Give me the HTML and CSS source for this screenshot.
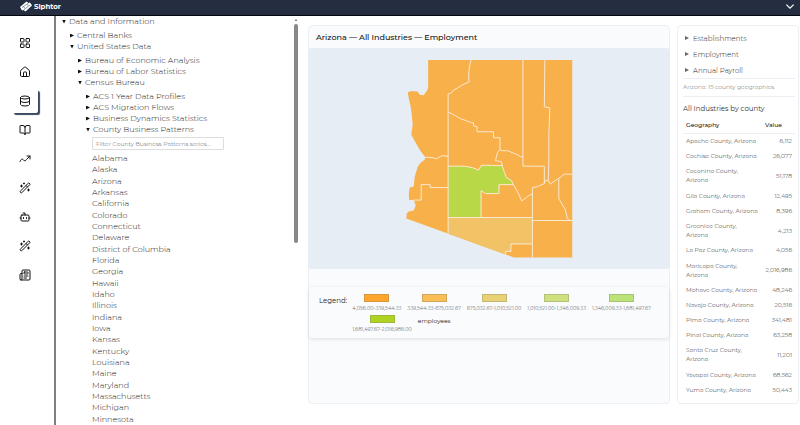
FILE: index.html
```
<!DOCTYPE html>
<html lang="en">
<head>
  <meta charset="UTF-8">
  <meta name="viewport" content="width=device-width, initial-scale=1.0">
  <title>Siphtor</title>
  <link rel="stylesheet" href="styles.css">
</head>
<body>
  <header class="topbar">
    <a href="#" class="brand">
      <svg class="logo" viewBox="0 0 24 22" aria-hidden="true">
        <path d="M0 12 13 1l4 3 3-1 4 6L11 21l-4-3-3 1z" fill="#fff"/>
        <path d="m4 13 13-9M7 18l13-10M7 12l3 2M14 7l3 2" stroke="#252e40" stroke-width="1"/>
      </svg>
      Siphtor
    </a>
    <button type="button" class="menu-toggle" aria-label="Open menu">
      <svg viewBox="0 0 10 8"><path d="m2 2 3 3 3-3"/></svg>
    </button>
  </header>

  <div class="layout">
    <!-- Icon navigation -->
    <nav class="rail">
      <a href="#" aria-label="Dashboard"><svg viewBox="0 0 24 24"><rect x="3" y="3" width="7" height="7" rx="1"/><rect x="14" y="3" width="7" height="7" rx="1"/><rect x="14" y="14" width="7" height="7" rx="1"/><rect x="3" y="14" width="7" height="7" rx="1"/></svg></a>
      <a href="#" aria-label="Home"><svg viewBox="0 0 24 24"><path d="M15 21v-8a1 1 0 0 0-1-1h-4a1 1 0 0 0-1 1v8"/><path d="M3 10a2 2 0 0 1 .7-1.5l7-6a2 2 0 0 1 2.6 0l7 6A2 2 0 0 1 21 10v9a2 2 0 0 1-2 2H5a2 2 0 0 1-2-2z"/></svg></a>
      <a href="#" class="active" aria-label="Data"><svg viewBox="0 0 24 24"><ellipse cx="12" cy="5" rx="9" ry="3"/><path d="M3 5v14a9 3 0 0 0 18 0V5M3 12a9 3 0 0 0 18 0"/></svg></a>
      <a href="#" aria-label="Library"><svg viewBox="0 0 24 24"><path d="M12 7v14M3 18a1 1 0 0 1-1-1V4a1 1 0 0 1 1-1h5a4 4 0 0 1 4 4 4 4 0 0 1 4-4h5a1 1 0 0 1 1 1v13a1 1 0 0 1-1 1h-6a3 3 0 0 0-3 3 3 3 0 0 0-3-3z"/></svg></a>
      <a href="#" aria-label="Trends"><svg viewBox="0 0 24 24"><path d="M16 6h6v6"/><path d="M2 17c3-6 5-6 7-3s4 2 6-1l7-7"/></svg></a>
      <a href="#" aria-label="Tools"><svg viewBox="0 0 24 24"><path d="m21.600 3.600-1.200-1.200a1.200 1.200 0 0 0-1.700 0L2.400 18.600a1.200 1.200 0 0 0 0 1.700l1.300 1.300a1.200 1.200 0 0 0 1.700 0L21.600 5.400a1.200 1.200 0 0 0 0-1.800M14 7l3 3M5 6v4M19 14v4M10 2v2M7 8H3M21 16h-4M11 3H9"/></svg></a>
      <a href="#" aria-label="Assistant"><svg viewBox="0 0 24 24"><path d="M12 8V4H8"/><rect x="4" y="8" width="16" height="12" rx="2"/><path d="M2 14h2M20 14h2M15 13v2M9 13v2"/></svg></a>
      <a href="#" aria-label="Builder"><svg viewBox="0 0 24 24"><path d="m21.600 3.600-1.200-1.200a1.200 1.200 0 0 0-1.700 0L2.400 18.600a1.200 1.200 0 0 0 0 1.700l1.300 1.300a1.200 1.200 0 0 0 1.700 0L21.600 5.400a1.200 1.200 0 0 0 0-1.800M14 7l3 3M5 6v4M19 14v4M10 2v2M7 8H3M21 16h-4M11 3H9"/></svg></a>
      <a href="#" aria-label="News"><svg viewBox="0 0 24 24"><path d="M15 18h-5M18 14h-8M4 22h16a2 2 0 0 0 2-2V4a2 2 0 0 0-2-2H8a2 2 0 0 0-2 2v16a2 2 0 0 1-4 0v-9a2 2 0 0 1 2-2h2"/><rect x="10" y="6" width="8" height="4" rx="1"/></svg></a>
    </nav>

    <!-- Data tree -->
    <aside class="tree-panel">
      <div class="tree">
        <ul>
          <li><span class="node open">Data and Information</span>
            <ul>
              <li><span class="node">Central Banks</span></li>
              <li><span class="node open">United States Data</span>
                <ul>
                  <li><span class="node">Bureau of Economic Analysis</span></li>
                  <li><span class="node">Bureau of Labor Statistics</span></li>
                  <li><span class="node open">Census Bureau</span>
                    <ul>
                      <li><span class="node">ACS 1 Year Data Profiles</span></li>
                      <li><span class="node">ACS Migration Flows</span></li>
                      <li><span class="node">Business Dynamics Statistics</span></li>
                      <li><span class="node open">County Business Patterns</span></li>
                    </ul>
                  </li>
                </ul>
              </li>
            </ul>
          </li>
        </ul>
        <input type="text" class="filter" aria-label="Filter series" placeholder="Filter County Business Patterns series...">
        <ul class="states">
          <li>Alabama</li>
          <li>Alaska</li>
          <li>Arizona</li>
          <li>Arkansas</li>
          <li>California</li>
          <li>Colorado</li>
          <li>Connecticut</li>
          <li>Delaware</li>
          <li>District of Columbia</li>
          <li>Florida</li>
          <li>Georgia</li>
          <li>Hawaii</li>
          <li>Idaho</li>
          <li>Illinois</li>
          <li>Indiana</li>
          <li>Iowa</li>
          <li>Kansas</li>
          <li>Kentucky</li>
          <li>Louisiana</li>
          <li>Maine</li>
          <li>Maryland</li>
          <li>Massachusetts</li>
          <li>Michigan</li>
          <li>Minnesota</li>
        </ul>
      </div>
      <div class="scrollbar">
        <svg viewBox="0 0 4 3"><path d="M0 3 2 0l2 3z"/></svg>
        <div class="thumb"></div>
      </div>
    </aside>

    <main class="content">
      <!-- Map -->
      <section class="card map-card">
        <h1>Arizona — All Industries — Employment</h1>
        <svg class="map" viewBox="308 48 363 222" role="img" aria-label="Arizona counties by employment">
          <path class="land" d="M428.500 60H573V258H514.500L406.500 219 407 214 409 212 414 211 416 206 415 203 414 200.500H409.500L409 195 410 188 414 187 415 177 418 167 421 163 425 160 425.500 157.500 420 150 416 143 411.500 135 413 125 412 115 411 107 409.500 101 408 92.500 412 91 418 91.500 420 95 424 95.500 427 91 428.500 88Z"/>
          <path class="high" d="M448.500 166.500H465L473 168 479 170.500 482 165.500 503 166 505 173 507 178 509 180 511 179 514 185H499.500V194H486L481.500 191V218H448.500Z"/>
          <path class="mid" d="M448.500 218H532.500V244.500H511.500V252H506V255L448.500 234Z"/>
          <g class="borders">
            <path d="M471.500 60 470 66 469 76 469.500 82 463 85 458 88 453 91 452 93 448.500 94V234"/>
            <path d="M448.500 112 456 116 461 119 467 121 472 123H474V126L477.500 127V132H494V138H500.500V150L503 151 508 151 513 153 518 155 521 157H523.500"/>
            <path d="M523.500 60V166.500H545V184L538 187 533 188V258"/>
            <path d="M545.500 60 545 107 550.500 108 549.500 135V160L549 181 546 181 545 184M549 181 551 184.500 558 179.500 562 177 565 174.500H573"/>
            <path d="M500.500 150 498 153 496 161 502 162 503 167 505 173 507 178 512 181 514 185 518 192 522.500 201.500 528 197 533 194"/>
            <path d="M559.500 179V199L566 210 568 219 571 221"/>
            <path d="M425.500 157.500 433 158 437 159 442 156 448.500 156.500M414 200.500H421.500V185H430.500V188H448.500M533 221H573M448.500 218H533"/>
            <path d="M448.500 166.500H465L473 168 479 170.500 482 165.500 503 166M514 185H499.500V194H486L481.500 191V218M532.500 244.500H511.500V252H506V255"/>
          </g>
        </svg>
        <div class="legend">
          <span class="legend-title">Legend:</span>
          <div class="legend-items">
            <div class="legend-item"><i class="swatch s1"></i>4,056.00-339,544.33</div>
            <div class="legend-item"><i class="swatch s2"></i>339,544.33-675,032.67</div>
            <div class="legend-item"><i class="swatch s3"></i>675,032.67-1,010,521.00</div>
            <div class="legend-item"><i class="swatch s4"></i>1,010,521.00-1,346,009.33</div>
            <div class="legend-item"><i class="swatch s5"></i>1,346,009.33-1,681,497.67</div>
            <div class="legend-item"><i class="swatch s6"></i>1,681,497.67-2,016,986.00</div>
            <span class="unit">employees</span>
          </div>
        </div>
      </section>

      <!-- Series and values -->
      <section class="card side-card">
        <ul class="series">
          <li><span class="node">Establishments</span></li>
          <li><span class="node">Employment</span></li>
          <li><span class="node">Annual Payroll</span></li>
        </ul>
        <p class="note">Arizona: 15 county geographies</p>
        <h2>All Industries by county</h2>
        <table>
          <thead>
            <tr><th>Geography</th><th>Value</th></tr>
          </thead>
          <tbody>
            <tr><td>Apache County, Arizona</td><td>6,112</td></tr>
            <tr><td>Cochise County, Arizona</td><td>26,077</td></tr>
            <tr><td>Coconino County,<br>Arizona</td><td>51,178</td></tr>
            <tr><td>Gila County, Arizona</td><td>12,495</td></tr>
            <tr><td>Graham County, Arizona</td><td>8,396</td></tr>
            <tr><td>Greenlee County,<br>Arizona</td><td>4,213</td></tr>
            <tr><td>La Paz County, Arizona</td><td>4,056</td></tr>
            <tr><td>Maricopa County,<br>Arizona</td><td>2,016,986</td></tr>
            <tr><td>Mohave County, Arizona</td><td>48,246</td></tr>
            <tr><td>Navajo County, Arizona</td><td>20,516</td></tr>
            <tr><td>Pima County, Arizona</td><td>341,481</td></tr>
            <tr><td>Pinal County, Arizona</td><td>63,258</td></tr>
            <tr><td>Santa Cruz County,<br>Arizona</td><td>11,201</td></tr>
            <tr><td>Yavapai County, Arizona</td><td>68,562</td></tr>
            <tr><td>Yuma County, Arizona</td><td>50,443</td></tr>
          </tbody>
        </table>
      </section>
    </main>
  </div>
</body>
</html>
```
FILE: styles.css
```
* {
  box-sizing: border-box;
}

body {
  font-family: Montserrat, Inter, sans-serif;
  font-size: 8px;
  font-weight: 300;
  line-height: 11px;
  margin: 0;
  color: #222;
  background-color: #fff;
  display: flex;
  flex-direction: column;
  height: 100vh;
  overflow: hidden;
}

ul {
  list-style: none;
  margin: 0;
  padding: 0;
}

h1,
h2,
p {
  margin: 0;
}

/* Top bar */
.topbar {
  display: flex;
  justify-content: space-between;
  align-items: center;
  height: 16px;
  padding: 0 4px 2px 20px;
  background-color: #252e40;
  border-bottom: 1px solid #05070f;
}

.brand {
  display: flex;
  align-items: center;
  gap: 2px;
  color: #fff;
  font-size: 7px;
  font-weight: 700;
  text-decoration: none;
}

.logo {
  width: 12px;
  height: 11px;
}

.menu-toggle {
  display: flex;
  padding: 0;
  border: none;
  background: none;
  cursor: pointer;
}

.menu-toggle svg {
  width: 12px;
  height: 10px;
  fill: none;
  stroke: #fff;
}

.layout {
  flex: 1;
  display: flex;
  min-height: 0;
}

/* Icon navigation */
.rail {
  flex: 0 0 54px;
  display: flex;
  flex-direction: column;
  align-items: center;
  gap: 5px;
  padding: 15px 4px 0 0;
}

.rail a {
  display: flex;
  align-items: center;
  justify-content: center;
  width: 26px;
  height: 24px;
  border-radius: 2px;
}

.rail a.active {
  box-shadow: 2px 2px 1px #3a4560;
  background-color: #fff;
}

.rail svg {
  width: 12px;
  height: 12px;
  fill: none;
  stroke: #111;
  stroke-width: 2;
  stroke-linecap: round;
  stroke-linejoin: round;
}

/* Data tree */
.tree-panel {
  flex: 0 0 246px;
  display: flex;
  border-left: 2px solid #808080;
}

.tree {
  flex: 1;
  display: flex;
  flex-direction: column;
  padding-left: 6px;
}

.tree ul ul {
  padding: 3px 0 0 8px;
}

.node {
  display: flex;
  align-items: center;
  gap: 3px;
}

.node::before {
  content: "";
  width: 4px;
  height: 4px;
  background-color: #111;
  clip-path: polygon(0 0, 100% 50%, 0 100%);
}

.node.open::before {
  clip-path: polygon(0 0, 100% 0, 50% 100%);
}

.filter {
  width: 132px;
  height: 13px;
  margin: 2px 0 3px 30px;
  padding: 0 3px;
  border: 1px solid #ddd;
  border-radius: 1px;
  font-family: inherit;
  font-size: 6px;
  font-weight: 300;
}

.filter::placeholder {
  color: #555;
}

.states {
  flex: 1;
  display: flex;
  flex-direction: column;
  padding-left: 30px;
}

.states li {
  flex: 1;
}

.scrollbar {
  display: flex;
  flex-direction: column;
  gap: 3px;
  width: 5px;
  margin-right: 1px;
  padding-top: 3px;
}

.scrollbar svg {
  width: 4px;
  height: 2px;
  fill: #777;
}

.thumb {
  width: 4px;
  height: 54%;
  border-radius: 2px;
  background-color: #888;
}

/* Main content */
.content {
  flex: 1;
  display: grid;
  grid-template-columns: 1fr 122px;
  gap: 7px;
  padding: 9px 1px 21px 8px;
}

.card {
  display: flex;
  flex-direction: column;
  border: 1px solid #eceff3;
  border-radius: 4px;
}

.map-card {
  background-color: #fafbfd;
}

h1 {
  padding: 6px 7px 5px;
  color: #111;
  font-size: 8px;
  font-weight: 500;
  line-height: 11px;
}

.map {
  display: block;
  margin: 0 -1px;
  border-radius: 4px;
  background-color: #e7edf5;
}

.land {
  fill: #f8b04b;
}

.high {
  fill: #b9d847;
}

.mid {
  fill: #f1c266;
}

.borders {
  fill: none;
  stroke: #fbe9d2;
  stroke-width: 1;
}

.legend {
  display: flex;
  gap: 5px;
  margin-top: 18px;
  padding: 7px 10px 5px;
  border-radius: 4px;
  box-shadow: 0 1px 4px rgba(0, 0, 0, 0.12);
}

.legend-title {
  padding-top: 1px;
  color: #222;
  font-size: 7px;
  font-weight: 400;
}

.legend-items {
  flex: 1;
  display: flex;
  flex-wrap: wrap;
  gap: 3px 6px;
}

.legend-item {
  display: flex;
  flex-direction: column;
  align-items: center;
  gap: 2px;
  color: #777;
  font-size: 5px;
  font-weight: 400;
  line-height: 8px;
}

.swatch {
  width: 25px;
  height: 8px;
  border: 1px solid rgba(120, 120, 120, 0.3);
}

.s1 { background-color: #ffa62b; }
.s2 { background-color: #f9be55; }
.s3 { background-color: #e8d273; }
.s4 { background-color: #cfe17f; }
.s5 { background-color: #bbe378; }
.s6 { background-color: #b0d321; }

.unit {
  padding-top: 1px;
  color: #222;
  font-size: 6px;
  font-weight: 400;
}

/* Series and values */
.side-card {
  padding: 4px 3px 5px 5px;
}

.series {
  padding-left: 2px;
}

.series .node {
  height: 16px;
  gap: 4px;
  font-size: 7px;
}

.series .node::before {
  background-color: #666;
}

.note {
  padding: 4px 0;
  border: 1px solid #eceff3;
  border-width: 1px 0;
  color: #666;
  font-size: 6px;
  line-height: 9px;
}

h2 {
  padding: 6px 0 4px;
  color: #333;
  font-size: 7px;
  font-weight: 400;
}

table {
  flex: 1;
  width: 100%;
  border-collapse: collapse;
  font-size: 6px;
  line-height: 9px;
}

th,
td {
  padding: 3px;
  text-align: left;
}

th {
  color: #222;
  font-weight: 500;
  border-bottom: 1px solid #eceff3;
}

td:last-child {
  text-align: right;
}
```
